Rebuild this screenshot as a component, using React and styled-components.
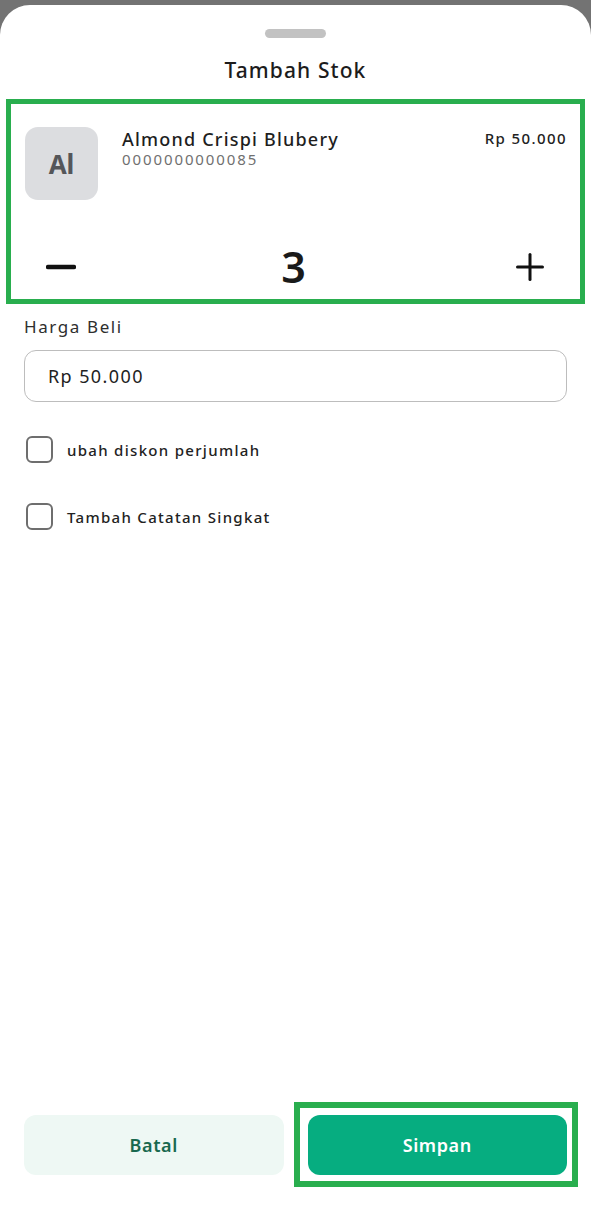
import styled, { createGlobalStyle } from "styled-components"

const GlobalStyle = createGlobalStyle`
  html, body {
    margin: 0;
    padding: 0;
    background: #737373;
  }
  * {
    box-sizing: border-box;
  }
`

const Halaman = styled.div`
  min-height: 100vh;
  padding-top: 5px;
  display: flex;
  flex-direction: column;
  font-family: "Noto Sans", "Open Sans", sans-serif;
`

const Sheet = styled.div`
  flex: 1;
  background: #ffffff;
  border-radius: 30px 30px 0 0;
  display: flex;
  flex-direction: column;
`

const Handle = styled.div`
  width: 61px;
  height: 9px;
  border-radius: 5px;
  background: #c2c2c2;
  margin: 24px auto 0;
`

const Judul = styled.h2`
  margin: 18px 0 0;
  font-size: 21px;
  line-height: 28px;
  font-weight: 500;
  letter-spacing: 1.1px;
  color: #1c1c1c;
  text-align: center;
`

const KartuProduk = styled.div`
  margin: 15px 6px 0;
  border: 5px solid #29ae4e;
  padding: 23px 14px 12px 14px;
  display: flex;
  flex-direction: column;
`

const BarisProduk = styled.div`
  display: flex;
  align-items: flex-start;
  gap: 24px;
`

const Avatar = styled.div`
  width: 73px;
  height: 73px;
  border-radius: 13px;
  background: #dcdde0;
  color: #555659;
  font-size: 26px;
  font-weight: 700;
  display: flex;
  align-items: center;
  justify-content: center;
  flex-shrink: 0;
`

const InfoProduk = styled.div`
  flex: 1;
  display: flex;
  flex-direction: column;
  padding-top: 1px;
`

const NamaProduk = styled.div`
  font-size: 18px;
  line-height: 22px;
  font-weight: 500;
  letter-spacing: 1.2px;
  color: #1e1e1e;
`

const KodeProduk = styled.div`
  font-size: 15px;
  line-height: 18px;
  color: #707070;
  letter-spacing: 1.9px;
`

const HargaProduk = styled.div`
  font-size: 15px;
  line-height: 20px;
  font-weight: 500;
  letter-spacing: 1.4px;
  margin-right: -1px;
  color: #222;
  padding-top: 1px;
`

const BarisJumlah = styled.div`
  margin-top: 47px;
  height: 40px;
  padding: 0 16px;
  display: flex;
  align-items: center;
  justify-content: space-between;
`

const TombolJumlah = styled.button`
  width: 40px;
  height: 40px;
  padding: 0;
  border: none;
  background: transparent;
  display: flex;
  align-items: center;
  justify-content: center;
  cursor: pointer;
`

const Jumlah = styled.div`
  font-size: 43px;
  line-height: 40px;
  font-weight: 600;
  color: #1a1a1a;
  margin-right: 4px;
`

const Form = styled.div`
  padding: 0 24px;
  display: flex;
  flex-direction: column;
`

const Label = styled.label`
  margin-top: 12px;
  font-size: 17px;
  line-height: 22px;
  letter-spacing: 1.6px;
  color: #2e2e2e;
`

const Input = styled.input`
  margin-top: 12px;
  height: 52px;
  border: 1.5px solid #bdbdbd;
  border-radius: 12px;
  padding: 0 23px;
  font-family: inherit;
  font-size: 18px;
  letter-spacing: 1.4px;
  color: #222;
  outline: none;
`

const BarisCentang = styled.label`
  margin-top: ${(props) => props.$jarak}px;
  padding-left: 2px;
  display: flex;
  align-items: center;
  gap: 14px;
  cursor: pointer;
`

const KotakCentang = styled.span`
  width: 27px;
  height: 27px;
  border: 2.5px solid #6e6e6e;
  border-radius: 6px;
  flex-shrink: 0;
`

const TeksCentang = styled.span`
  font-size: 15px;
  line-height: 20px;
  font-weight: 500;
  letter-spacing: 1.3px;
  color: #222;
`

const Spacer = styled.div`
  flex: 1;
`

const Footer = styled.div`
  padding: 0 24px 33px;
  display: grid;
  grid-template-columns: 1fr 1fr;
  gap: 24px;
`

const Tombol = styled.button`
  position: relative;
  height: 60px;
  border: none;
  border-radius: 12px;
  background: ${(props) => (props.$utama ? "#06ad80" : "#eef8f4")};
  color: ${(props) => (props.$utama ? "#ffffff" : "#19694f")};
  font-family: inherit;
  font-size: 18px;
  font-weight: 600;
  letter-spacing: 0.6px;
  cursor: pointer;

  ${(props) =>
    props.$sorot &&
    `
    &::after {
      content: "";
      position: absolute;
      top: -13px;
      left: -14px;
      right: -11px;
      bottom: -12px;
      border: 6px solid #29ae4e;
      pointer-events: none;
    }
  `}
`

function IkonMinus() {
  return (
    <svg width="30" height="6" viewBox="0 0 30 6">
      <line x1="2" y1="3" x2="28" y2="3" stroke="#111" strokeWidth="4.5" strokeLinecap="round" />
    </svg>
  )
}

function IkonPlus() {
  return (
    <svg width="28" height="28" viewBox="0 0 28 28">
      <line x1="14" y1="1.5" x2="14" y2="26.5" stroke="#111" strokeWidth="3" strokeLinecap="round" />
      <line x1="1.5" y1="14" x2="26.5" y2="14" stroke="#111" strokeWidth="3" strokeLinecap="round" />
    </svg>
  )
}

export default function App() {
  return (
    <>
      <GlobalStyle />
      <Halaman>
        <Sheet>
          <Handle />
          <Judul>Tambah Stok</Judul>

          <KartuProduk>
            <BarisProduk>
              <Avatar>Al</Avatar>
              <InfoProduk>
                <NamaProduk>Almond Crispi Blubery</NamaProduk>
                <KodeProduk>0000000000085</KodeProduk>
              </InfoProduk>
              <HargaProduk>Rp 50.000</HargaProduk>
            </BarisProduk>
            <BarisJumlah>
              <TombolJumlah aria-label="Kurangi">
                <IkonMinus />
              </TombolJumlah>
              <Jumlah>3</Jumlah>
              <TombolJumlah aria-label="Tambah">
                <IkonPlus />
              </TombolJumlah>
            </BarisJumlah>
          </KartuProduk>

          <Form>
            <Label>Harga Beli</Label>
            <Input defaultValue="Rp 50.000" />
            <BarisCentang $jarak={34}>
              <KotakCentang />
              <TeksCentang>ubah diskon perjumlah</TeksCentang>
            </BarisCentang>
            <BarisCentang $jarak={40}>
              <KotakCentang />
              <TeksCentang>Tambah Catatan Singkat</TeksCentang>
            </BarisCentang>
          </Form>

          <Spacer />

          <Footer>
            <Tombol>Batal</Tombol>
            <Tombol $utama $sorot>
              Simpan
            </Tombol>
          </Footer>
        </Sheet>
      </Halaman>
    </>
  )
}
